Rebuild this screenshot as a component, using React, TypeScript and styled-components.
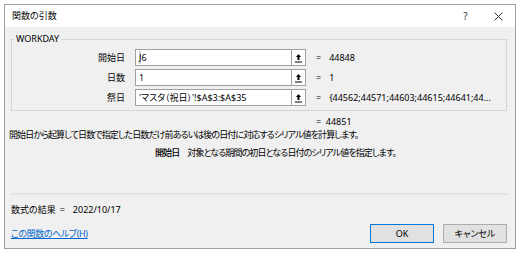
import React from 'react';
import styled, { createGlobalStyle } from 'styled-components';

const GlobalStyle = createGlobalStyle`
    html, body {
        margin: 0;
        background: #ffffff;
    }
    body {
        font-family: "Noto Sans", "Noto Sans CJK JP", sans-serif;
        font-size: 9px;
        color: #000;
        font-feature-settings: "palt";
    }
    * {
        box-sizing: border-box;
    }
`;

const Page = styled.div`
    padding: 4px 5px 0 4px;
`;

const Dialog = styled.div`
    width: 512px;
    height: 245px;
    border: 1px solid #a0a0a0;
    background: #f0f0f0;
    display: flex;
    flex-direction: column;
`;

const TitleBar = styled.div`
    height: 22px;
    background: #ffffff;
    display: flex;
    align-items: center;
    padding-left: 7px;
`;

const TitleText = styled.div`
    flex: 1;
    line-height: 14px;
`;

const TitleButton = styled.div`
    width: 33px;
    height: 22px;
    display: flex;
    align-items: center;
    justify-content: center;
    color: #333;
    font-size: 10px;
`;

const Body = styled.div`
    flex: 1;
    display: flex;
    flex-direction: column;
    padding: 0 8px 5px 4px;
`;

const GroupBox = styled.fieldset`
    margin: 5px 0 0 2px;
    padding: 3px 0 4px 2px;
    border: 1px solid #d5d5d5;
    min-width: 0;
`;

const Legend = styled.legend`
    padding: 0 2px;
    line-height: 14px;
`;

const Row = styled.div`
    display: flex;
    align-items: center;
    height: 17px;
    & + & {
        margin-top: 3px;
    }
`;

const Label = styled.div`
    width: 111px;
    margin-right: 10px;
    text-align: right;
    line-height: 14px;
`;

const InputBox = styled.div`
    width: 171px;
    height: 17px;
    border: 1px solid #a0a0a0;
    background: #ffffff;
    display: flex;
`;

const InputText = styled.div`
    flex: 1;
    padding-left: 3px;
    line-height: 15px;
    white-space: nowrap;
    overflow: hidden;
`;

const Selected = styled.span`
    background: #d0d0d0;
`;

const PickButton = styled.div`
    width: 14px;
    border-left: 1px solid #a0a0a0;
    display: flex;
    align-items: center;
    justify-content: center;
`;

const Equals = styled.span`
    margin: 0 8px 0 10px;
`;

const Value = styled.span`
    white-space: nowrap;
    overflow: hidden;
`;

const ResultRow = styled.div`
    margin: 4px 0 0 307px;
    line-height: 13px;
`;

const Description = styled.div`
    line-height: 13px;
    white-space: nowrap;
    letter-spacing: -0.9px;
`;

const ArgHelp = styled.div`
    margin-top: 5px;
    padding-left: 146px;
    display: flex;
    gap: 8px;
    line-height: 13px;
    letter-spacing: -0.9px;
    b {
        font-weight: 500;
    }
`;

const Footer = styled.div`
    margin-top: auto;
`;

const Separator = styled.div`
    margin-left: 1px;
    border-top: 2px solid #e3e3e3;
`;

const FormulaResult = styled.div`
    margin: 8px 0 0 2px;
    line-height: 13px;
    span + span {
        margin-left: 4px;
    }
    .value {
        margin-left: 8px;
    }
`;

const BottomRow = styled.div`
    margin-top: 8px;
    height: 19px;
    padding-left: 2px;
    display: flex;
    align-items: center;
    justify-content: space-between;
`;

const HelpLink = styled.a`
    color: #0066cc;
    text-decoration: underline;
    line-height: 13px;
    letter-spacing: -0.4px;
`;

const ButtonGroup = styled.div`
    display: flex;
    gap: 9px;
`;

const DialogButton = styled.button<{ $primary?: boolean }>`
    width: 64px;
    height: 19px;
    padding: 0;
    border: 1px solid ${(p) => (p.$primary ? '#0078d7' : '#adadad')};
    background: #e1e1e1;
    font: inherit;
    color: #000;
`;

const PickIcon = () => (
    <svg width="7" height="10" viewBox="0 0 7 10">
        <path d="M3.5 1 L6 4 H4.5 V7 H2.5 V4 H1 Z" fill="#000" />
        <rect x="0" y="8.5" width="7" height="1" fill="#000" />
    </svg>
);

const CloseIcon = () => (
    <svg width="9" height="9" viewBox="0 0 9 9">
        <path d="M0.5 0.5 L8.5 8.5 M8.5 0.5 L0.5 8.5" stroke="#333" strokeWidth="1" />
    </svg>
);

type TArg = { label: string; input: React.ReactNode; value: string };

const args: TArg[] = [
    { label: '開始日', input: <><Selected>J</Selected>6</>, value: '44848' },
    { label: '日数', input: '1', value: '1' },
    { label: '祭日', input: "'マスタ（祝日）'!$A$3:$A$35", value: '{44562;44571;44603;44615;44641;44...' },
];

const App: React.FC = () => {
    return (
        <>
            <GlobalStyle />
            <Page>
                <Dialog>
                    <TitleBar>
                        <TitleText>関数の引数</TitleText>
                        <TitleButton>?</TitleButton>
                        <TitleButton><CloseIcon /></TitleButton>
                    </TitleBar>
                    <Body>
                        <GroupBox>
                            <Legend>WORKDAY</Legend>
                            {args.map((arg) => (
                                <Row key={arg.label}>
                                    <Label>{arg.label}</Label>
                                    <InputBox>
                                        <InputText>{arg.input}</InputText>
                                        <PickButton><PickIcon /></PickButton>
                                    </InputBox>
                                    <Equals>=</Equals>
                                    <Value>{arg.value}</Value>
                                </Row>
                            ))}
                        </GroupBox>
                        <ResultRow>=&nbsp;&nbsp;44851</ResultRow>
                        <Description>開始日から起算して日数で指定した日数だけ前あるいは後の日付に対応するシリアル値を計算します。</Description>
                        <ArgHelp>
                            <b>開始日</b>
                            <span>対象となる期間の初日となる日付のシリアル値を指定します。</span>
                        </ArgHelp>
                        <Footer>
                            <Separator />
                            <FormulaResult>
                                <span>数式の結果</span>
                                <span>=</span>
                                <span className="value">2022/10/17</span>
                            </FormulaResult>
                            <BottomRow>
                                <HelpLink href="#">この関数のヘルプ(H)</HelpLink>
                                <ButtonGroup>
                                    <DialogButton $primary>OK</DialogButton>
                                    <DialogButton>キャンセル</DialogButton>
                                </ButtonGroup>
                            </BottomRow>
                        </Footer>
                    </Body>
                </Dialog>
            </Page>
        </>
    );
};

export default App;
